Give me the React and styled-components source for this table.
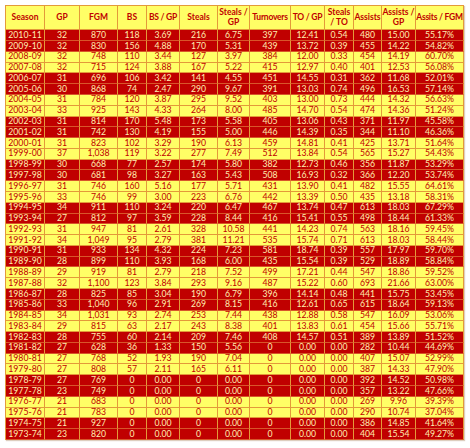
import React from "react";
import styled, { createGlobalStyle } from "styled-components";

const Global = createGlobalStyle`
  html, body { margin: 0; padding: 0; background: #ffffff; }
  body { font-family: "Lato", "Open Sans", "Liberation Sans", sans-serif; }
`;

const COLS = "39px 35px 38px 29px 33px 38px 32px 41px 34px 29px 28px 34px 48px";

const Page = styled.div`
  padding: 4px 0 0 5px;
  width: 470px;
  height: 448px;
  box-sizing: border-box;
`;

const Table = styled.div`
  display: inline-grid;
  grid-template-columns: 1fr;
  border-top: 1px solid #e39a3a;
  border-left: 1px solid #e39a3a;
  box-shadow: 1px 1px 1px rgba(120, 60, 0, 0.25);
`;

const Row = styled.div`
  display: grid;
  grid-template-columns: ${COLS};
  height: ${(p) => (p.$head ? "24px" : "10.79px")};
  background: ${(p) => (p.$red ? "#c00000" : "#ffff66")};
  color: ${(p) => (p.$red ? "#ffeeb0" : "#c00000")};
`;

const Cell = styled.div`
  display: flex;
  align-items: center;
  justify-content: center;
  text-align: center;
  box-sizing: border-box;
  border-right: 1px solid #e39a3a;
  border-bottom: 1px solid ${(p) => (p.$red ? "#d8562a" : "#e39a3a")};
  font-size: 8.7px;
  line-height: 1;
  white-space: nowrap;
  overflow: hidden;
`;

const HeadCell = styled(Cell)`
  font-weight: 700;
  font-size: 8.5px;
  line-height: 9.5px;
  white-space: ${(p) => (p.$nowrap ? "nowrap" : "normal")};
  letter-spacing: ${(p) => (p.$nowrap ? "-0.25px" : "0")};
  color: #c00000;
`;

const HEAD = [
  ["Season"], ["GP"], ["FGM"], ["BS"], ["BS / GP", 1], ["Steals"], ["Steals / GP"],
  ["Turnovers", 1], ["TO / GP", 1], ["Steals / TO"], ["Assists"], ["Assists / GP"],
  ["Assits / FGM", 1],
];

const DATA = [
  "2010-11 32 870 118 3.69 216 6.75 397 12.41 0.54 480 15.00 55.17%",
  "2009-10 32 830 156 4.88 170 5.31 439 13.72 0.39 455 14.22 54.82%",
  "2008-09 32 748 110 3.44 127 3.97 384 12.00 0.33 454 14.19 60.70%",
  "2007-08 32 715 124 3.88 167 5.22 415 12.97 0.40 401 12.53 56.08%",
  "2006-07 31 696 106 3.42 141 4.55 451 14.55 0.31 362 11.68 52.01%",
  "2005-06 30 868 74 2.47 290 9.67 391 13.03 0.74 496 16.53 57.14%",
  "2004-05 31 784 120 3.87 295 9.52 403 13.00 0.73 444 14.32 56.63%",
  "2003-04 33 925 143 4.33 264 8.00 485 14.70 0.54 474 14.36 51.24%",
  "2002-03 31 814 170 5.48 173 5.58 405 13.06 0.43 371 11.97 45.58%",
  "2001-02 31 742 130 4.19 155 5.00 446 14.39 0.35 344 11.10 46.36%",
  "2000-01 31 823 102 3.29 190 6.13 459 14.81 0.41 425 13.71 51.64%",
  "1999-00 37 1,038 119 3.22 277 7.49 512 13.84 0.54 565 15.27 54.43%",
  "1998-99 30 668 77 2.57 174 5.80 382 12.73 0.46 356 11.87 53.29%",
  "1997-98 30 681 98 3.27 163 5.43 508 16.93 0.32 366 12.20 53.74%",
  "1996-97 31 746 160 5.16 177 5.71 431 13.90 0.41 482 15.55 64.61%",
  "1995-96 33 746 99 3.00 223 6.76 442 13.39 0.50 435 13.18 58.31%",
  "1994-95 34 911 110 3.24 220 6.47 467 13.74 0.47 613 18.03 67.29%",
  "1993-94 27 812 97 3.59 228 8.44 416 15.41 0.55 498 18.44 61.33%",
  "1992-93 31 947 81 2.61 328 10.58 441 14.23 0.74 563 18.16 59.45%",
  "1991-92 34 1,049 95 2.79 381 11.21 535 15.74 0.71 613 18.03 58.44%",
  "1990-91 31 933 134 4.32 224 7.23 581 18.74 0.39 557 17.97 59.70%",
  "1989-90 28 899 110 3.93 168 6.00 435 15.54 0.39 529 18.89 58.84%",
  "1988-89 29 919 81 2.79 218 7.52 499 17.21 0.44 547 18.86 59.52%",
  "1987-88 32 1,100 123 3.84 293 9.16 487 15.22 0.60 693 21.66 63.00%",
  "1986-87 28 825 85 3.04 190 6.79 396 14.14 0.48 441 15.75 53.45%",
  "1985-86 33 1,040 96 2.91 269 8.15 416 12.61 0.65 615 18.64 59.13%",
  "1984-85 34 1,031 93 2.74 253 7.44 438 12.88 0.58 547 16.09 53.06%",
  "1983-84 29 815 63 2.17 243 8.38 401 13.83 0.61 454 15.66 55.71%",
  "1982-83 28 755 60 2.14 209 7.46 408 14.57 0.51 389 13.89 51.52%",
  "1981-82 27 628 36 1.33 150 5.56 0 0.00 0.00 282 10.44 44.69%",
  "1980-81 27 768 52 1.93 190 7.04 0 0.00 0.00 407 15.07 52.99%",
  "1979-80 27 808 57 2.11 165 6.11 0 0.00 0.00 387 14.33 47.90%",
  "1978-79 27 769 0 0.00 0 0.00 0 0.00 0.00 392 14.52 50.98%",
  "1977-78 23 749 0 0.00 0 0.00 0 0.00 0.00 357 13.22 47.66%",
  "1976-77 21 683 0 0.00 0 0.00 0 0.00 0.00 269 9.96 39.39%",
  "1975-76 21 783 0 0.00 0 0.00 0 0.00 0.00 290 10.74 37.04%",
  "1974-75 21 927 0 0.00 0 0.00 0 0.00 0.00 386 14.85 41.64%",
  "1973-74 23 820 0 0.00 0 0.00 0 0.00 0.00 404 15.54 49.27%",
].map((s) => s.split(" "));

export default function App() {
  return (
    <>
      <Global />
      <Page>
        <Table>
          <Row $head>
            {HEAD.map(([h, nw]) => (
              <HeadCell key={h} $nowrap={!!nw}>{h}</HeadCell>
            ))}
          </Row>
          {DATA.map((r, i) => {
            const red = Math.floor(i / 2) % 2 === 0;
            return (
              <Row key={r[0]} $red={red}>
                {r.map((v, j) => (
                  <Cell key={j} $red={red}>{v}</Cell>
                ))}
              </Row>
            );
          })}
        </Table>
      </Page>
    </>
  );
}
